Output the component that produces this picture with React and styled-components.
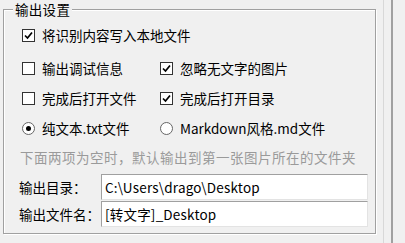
import React from "react";
import styled, { createGlobalStyle } from "styled-components";

const GlobalStyle = createGlobalStyle`
  body {
    margin: 0;
    background: #f0f0f0;
    font-family: "Noto Sans CJK SC", "Liberation Sans", sans-serif;
    font-size: 13.5px;
    color: #000;
  }
`;

const Page = styled.div`
  display: flex;
  width: 405px;
  height: 243px;
  overflow: hidden;
`;

const Group = styled.div`
  position: relative;
  box-sizing: border-box;
  margin: 9px 0 0 3px;
  width: 373px;
  height: 225px;
  border: 1px solid #a0a0a0;
  box-shadow: inset 1px 1px 0 #fff, 1px 1px 0 #fff;
  padding: 10px 6px 0 16px;
  display: flex;
  flex-direction: column;
`;

const Legend = styled.span`
  position: absolute;
  top: -8px;
  left: 9px;
  padding: 0 2px;
  background: #f0f0f0;
  line-height: 15px;
  letter-spacing: 0.3px;
`;

const Row = styled.div`
  display: flex;
  align-items: center;
  height: ${(p) => p.h || 30}px;
  margin-top: ${(p) => p.mt || 0}px;
  padding-left: ${(p) => p.indent || 0}px;
`;

const Option = styled.label`
  display: flex;
  align-items: center;
  gap: 7px;
  width: ${(p) => (p.w ? p.w + "px" : "auto")};
  line-height: 16px;
  white-space: nowrap;
`;

const Box = styled.span`
  box-sizing: border-box;
  width: 13px;
  height: 13px;
  border: 1px solid #333;
  background: #fff;
  display: flex;
  align-items: center;
  justify-content: center;
`;

const Radio = styled.span`
  box-sizing: border-box;
  width: 13px;
  height: 13px;
  border-radius: 50%;
  border: 1px solid #666;
  background: #fff;
  display: flex;
  align-items: center;
  justify-content: center;

  &::after {
    content: "";
    width: 5px;
    height: 5px;
    border-radius: 50%;
    background: ${(p) => (p.on ? "#000" : "transparent")};
  }
`;

const Hint = styled.div`
  height: 28px;
  display: flex;
  align-items: center;
  color: #9a9a9a;
  letter-spacing: 0.5px;
  white-space: nowrap;
`;

const Label = styled.span`
  width: 82px;
  margin-left: -1px;
  white-space: nowrap;
`;

const Field = styled.div`
  box-sizing: border-box;
  width: 267px;
  height: 100%;
  background: #fff;
  border-top: 1px solid #a0a0a0;
  border-left: 1px solid #a0a0a0;
  border-right: 1px solid #e3e3e3;
  border-bottom: 1px solid #e3e3e3;
  padding-left: 3px;
  display: flex;
  align-items: center;
  letter-spacing: 0.2px;
  white-space: nowrap;
  overflow: hidden;
`;

const Splitter = styled.div`
  margin-left: 7px;
  width: 7px;
  height: 100%;
  border-left: 1px solid #d8d8d8;
  border-right: 2px solid #a0a0a0;
`;

const Tick = () => (
  <svg width="9" height="9" viewBox="0 0 9 9">
    <path d="M1 4.5 L3.5 7 L8 1.5" fill="none" stroke="#000" strokeWidth="1.7" />
  </svg>
);

const Check = ({ on, w, children }) => (
  <Option w={w}>
    <Box>{on && <Tick />}</Box>
    {children}
  </Option>
);

const RadioOpt = ({ on, w, children }) => (
  <Option w={w}>
    <Radio on={on} />
    {children}
  </Option>
);

export default function App() {
  return (
    <Page>
      <GlobalStyle />
      <Group>
        <Legend>输出设置</Legend>
        <Row indent={2}>
          <Check on>将识别内容写入本地文件</Check>
        </Row>
        <Row indent={2} mt={3}>
          <Check w={138}>输出调试信息</Check>
          <Check on>忽略无文字的图片</Check>
        </Row>
        <Row indent={2}>
          <Check w={138}>完成后打开文件</Check>
          <Check on>完成后打开目录</Check>
        </Row>
        <Row indent={2}>
          <RadioOpt on w={138}>纯文本.txt文件</RadioOpt>
          <RadioOpt>Markdown风格.md文件</RadioOpt>
        </Row>
        <Hint>下面两项为空时，默认输出到第一张图片所在的文件夹</Hint>
        <Row h={26} mt={3}>
          <Label>输出目录：</Label>
          <Field>C:\Users\drago\Desktop</Field>
        </Row>
        <Row h={26} mt={1}>
          <Label>输出文件名：</Label>
          <Field>[转文字]_Desktop</Field>
        </Row>
      </Group>
      <Splitter />
    </Page>
  );
}
